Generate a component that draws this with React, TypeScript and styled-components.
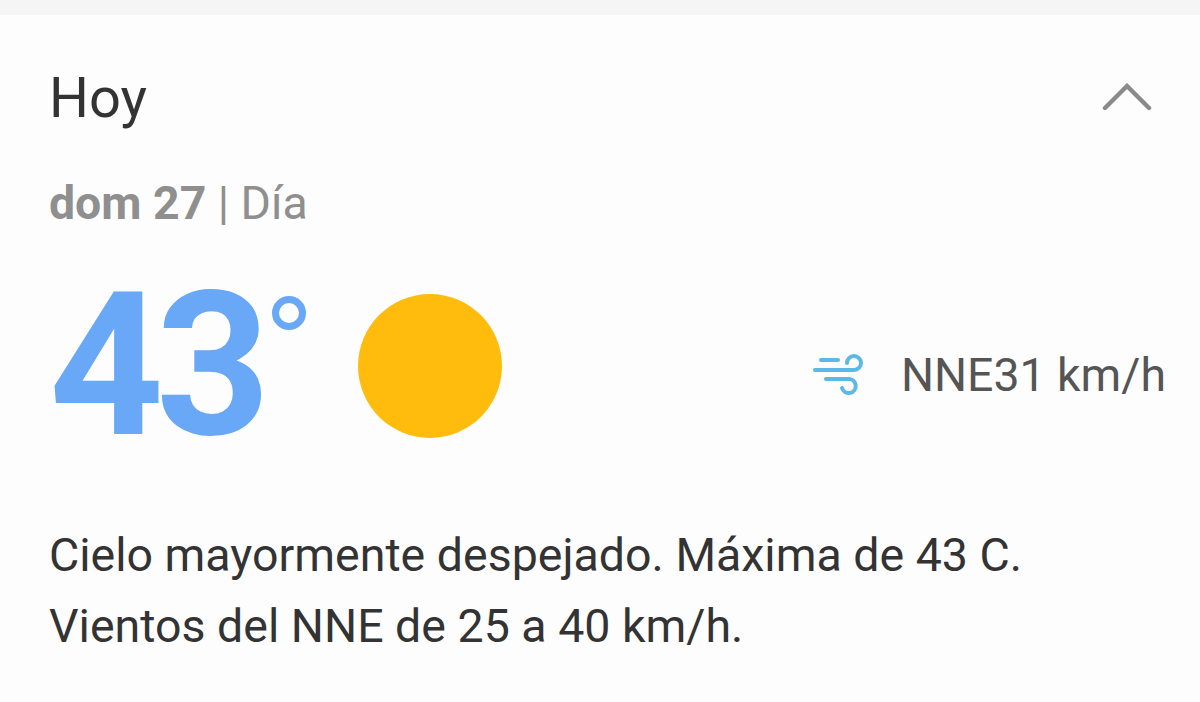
import styled, { createGlobalStyle } from 'styled-components'

const GlobalStyle = createGlobalStyle`
  html, body {
    margin: 0;
    padding: 0;
    background: #fdfdfd;
  }
`

const WindIcon = () => (
  <WindSvg viewBox="0 0 50 42" fill="none" stroke="#5cb8e6" strokeWidth="4" strokeLinecap="round">
    <path d="M8 6H25" />
    <path d="M2 16H41A7 7 0 1 0 34 9" />
    <path d="M13 25H36A7 7 0 1 1 29 34" />
  </WindSvg>
)

const App = () => (
  <Page>
    <GlobalStyle />
    <TopBand />
    <Card>
      <Header>
        <Title>Hoy</Title>
        <Chevron viewBox="0 0 50 30" fill="none" stroke="#8a8a8a" strokeWidth="4.4" strokeLinecap="round">
          <path d="M3 25L25 3L47 25" />
        </Chevron>
      </Header>
      <DateLine>
        <strong>dom 27</strong> | Día
      </DateLine>
      <Current>
        <TempGroup>
          <Temp>43</Temp>
          <Degree />
          <Sun />
        </TempGroup>
        <Wind>
          <WindIcon />
          <WindText>NNE31 km/h</WindText>
        </Wind>
      </Current>
      <Description>
        Cielo mayormente despejado. Máxima de 43 C.
        <br />
        Vientos del NNE de 25 a 40 km/h.
      </Description>
    </Card>
  </Page>
)

const Page = styled.div`
  width: 1200px;
  height: 702px;
  overflow: hidden;
  background: #fdfdfd;
  font-family: Roboto, 'Liberation Sans', sans-serif;
`

const TopBand = styled.div`
  height: 15px;
  background: #f5f5f5;
`

const Card = styled.div`
  display: flex;
  flex-direction: column;
  padding: 0 34px 0 49px;
`

const Header = styled.div`
  display: flex;
  align-items: center;
  justify-content: space-between;
  height: 82px;
  margin-top: 42px;
  padding-right: 14px;
`

const Title = styled.div`
  font-size: 56px;
  line-height: 60px;
  color: #333;
`

const Chevron = styled.svg`
  width: 50px;
  height: 30px;
`

const DateLine = styled.div`
  margin-top: 34px;
  font-size: 46.4px;
  line-height: 60px;
  color: #8f8f8f;

  strong {
    font-weight: 700;
  }
`

const Current = styled.div`
  display: flex;
  align-items: center;
  justify-content: space-between;
  margin-top: 45px;
  height: 176px;
`

const TempGroup = styled.div`
  display: flex;
  align-items: center;
`

const Temp = styled.div`
  font-size: 200px;
  line-height: 176px;
  font-weight: 700;
  letter-spacing: -8px;
  color: #68a8f7;
`

const Degree = styled.div`
  width: 34px;
  height: 34px;
  box-sizing: border-box;
  border: 7px solid #68a8f7;
  border-radius: 50%;
  margin: -106px 0 0 9px;
`

const Sun = styled.div`
  width: 144px;
  height: 144px;
  border-radius: 50%;
  background: #ffbc0d;
  margin-left: 52px;
`

const Wind = styled.div`
  display: flex;
  align-items: center;
  gap: 38px;
  margin-top: 17px;
`

const WindSvg = styled.svg`
  width: 50px;
  height: 42px;
`

const WindText = styled.div`
  font-size: 46.4px;
  line-height: 50px;
  color: #555;
`

const Description = styled.div`
  margin-top: 66px;
  font-size: 46.5px;
  line-height: 71px;
  color: #333;
`

export default App
